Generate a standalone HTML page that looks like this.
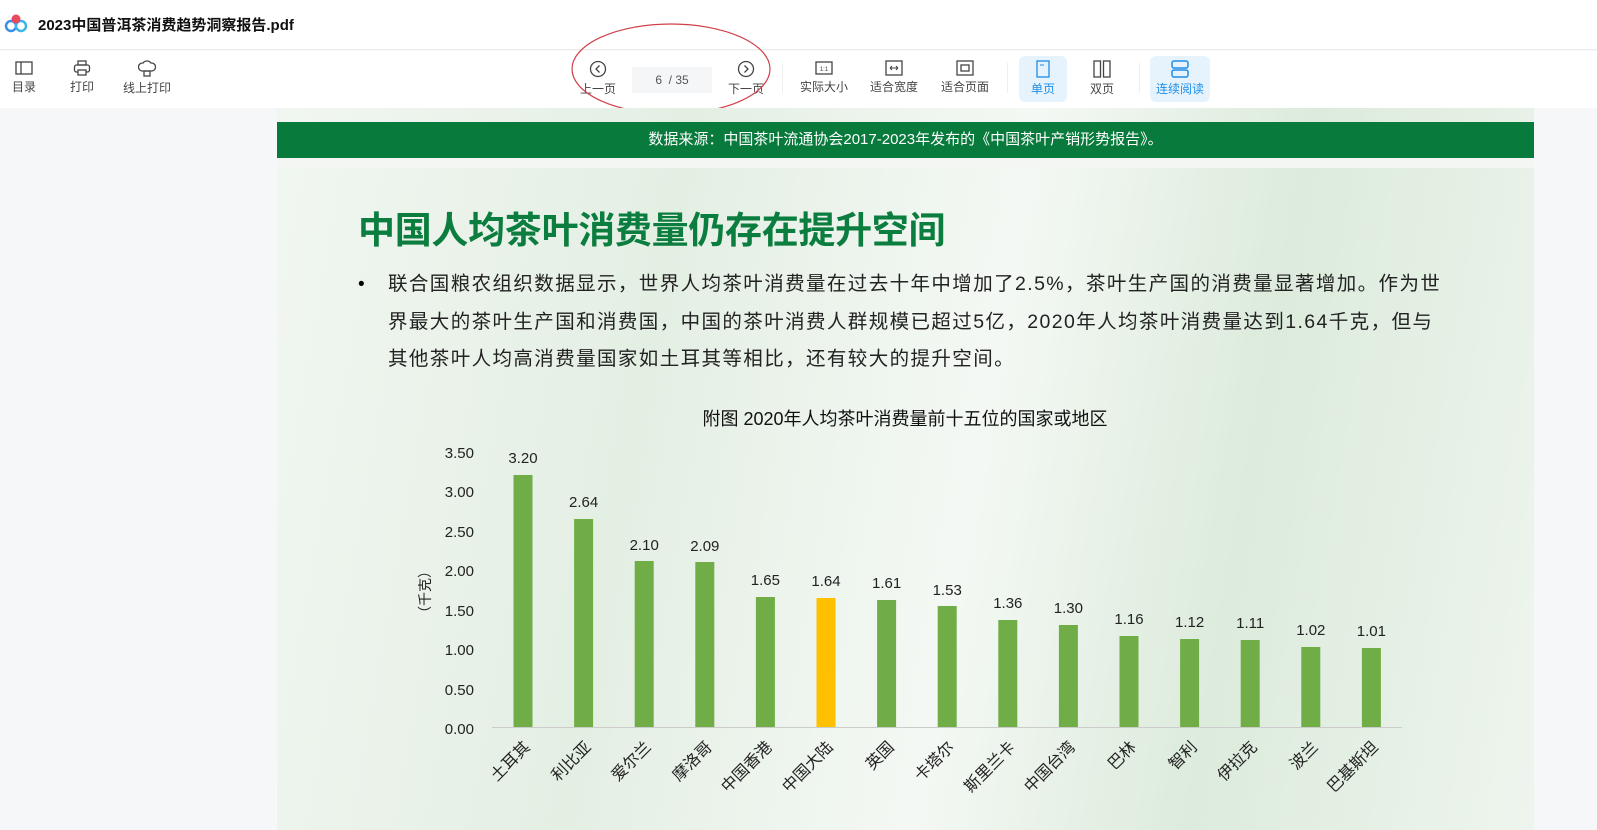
<!DOCTYPE html>
<html><head><meta charset="utf-8"><style>
*{margin:0;padding:0;box-sizing:border-box}
body{width:1597px;height:830px;overflow:hidden;background:#f6f7f9;font-family:"Liberation Sans","Noto Sans CJK SC",sans-serif;position:relative}
.top{position:absolute;left:0;top:0;width:1597px;height:50px;background:#fff;border-bottom:1px solid #ececec}
.title{position:absolute;left:38px;top:14px;font-size:15px;font-weight:bold;color:#111}
.tb{position:absolute;left:0;top:51px;width:1597px;height:57px;background:#fff}
.btn{position:absolute;top:0;height:52px;font-size:12px;color:#444;text-align:center}
.btn svg{display:block;margin:9px auto 2px}
.act{background:#e6f3fd;border-radius:6px;color:#1e8ee8}
.sep{position:absolute;top:12px;width:1px;height:30px;background:#eee}
.page{position:absolute;left:277px;top:108px;width:1257px;height:722px;background:linear-gradient(100deg,#f1f6f1 0%,#e4efe4 30%,#f4f8f4 55%,#dcebdc 75%,#eef5ee 100%)}
.band{position:absolute;left:277px;top:122px;width:1257px;height:36px;background:#077a3c;color:#fff;font-size:15px;text-align:center;line-height:36px}
.gap{position:absolute;left:277px;top:158px;width:1257px;height:10px;background:#f4f6f4}
.h1{position:absolute;left:358px;top:200px;font-size:37px;font-weight:bold;color:#0b7d3e;letter-spacing:-0.3px}
.p{position:absolute;left:388px;top:266px;font-size:19.5px;letter-spacing:1.4px;line-height:37.5px;color:#222;white-space:nowrap}
.dot{position:absolute;left:358px;top:266px;font-size:19px;line-height:37.5px}
</style></head><body>
<div class="top">
<svg style="position:absolute;left:4px;top:13px" width="24" height="20" viewBox="0 0 24 20"><circle cx="7" cy="13" r="5" fill="none" stroke="#3a8ee6" stroke-width="2.5"/><circle cx="17" cy="13" r="5" fill="none" stroke="#39b7e8" stroke-width="2.5"/><circle cx="12" cy="6" r="4.5" fill="#e84b5b"/></svg>
<div class="title">2023中国普洱茶消费趋势洞察报告.pdf</div>
</div>
<div class="tb">
<div class="btn" style="left:8px;width:32px"><svg width="18" height="16"><rect x="1" y="2" width="16" height="12" fill="none" stroke="#444" stroke-width="1.3"/><line x1="6" y1="2" x2="6" y2="14" stroke="#444" stroke-width="1.3"/></svg>目录</div>
<div class="btn" style="left:66px;width:32px"><svg width="18" height="16"><rect x="5" y="1" width="8" height="4" fill="none" stroke="#444" stroke-width="1.3"/><rect x="1.5" y="5" width="15" height="7" rx="2" fill="none" stroke="#444" stroke-width="1.3"/><rect x="5" y="10" width="8" height="5" fill="#fff" stroke="#444" stroke-width="1.3"/></svg>打印</div>
<div class="btn" style="left:122px;width:50px"><svg width="18" height="17"><path d="M4 11a4 4 0 0 1 1-8 5 5 0 0 1 8 0 4 4 0 0 1 1 8z" fill="none" stroke="#444" stroke-width="1.3"/><rect x="6" y="11" width="6" height="5" fill="none" stroke="#444" stroke-width="1.3"/></svg>线上打印</div>
<div class="btn" style="left:578px;width:40px"><svg width="18" height="18"><circle cx="9" cy="9" r="7.5" fill="none" stroke="#444" stroke-width="1.3"/><path d="M10.5 5.5 7 9l3.5 3.5" fill="none" stroke="#444" stroke-width="1.3"/></svg>上一页</div>
<div style="position:absolute;left:632px;top:16px;width:80px;height:26px;background:#f4f6f8;font-size:12px;color:#555;text-align:center;line-height:26px">6&nbsp;&nbsp;/ 35</div>
<div class="btn" style="left:726px;width:40px"><svg width="18" height="18"><circle cx="9" cy="9" r="7.5" fill="none" stroke="#444" stroke-width="1.3"/><path d="M7.5 5.5 11 9l-3.5 3.5" fill="none" stroke="#444" stroke-width="1.3"/></svg>下一页</div>
<div class="sep" style="left:782px"></div>
<div class="btn" style="left:798px;width:52px"><svg width="18" height="16"><rect x="1" y="2" width="16" height="12" fill="none" stroke="#444" stroke-width="1.3"/><text x="9" y="11" font-size="6" text-anchor="middle" fill="#444">1:1</text></svg>实际大小</div>
<div class="btn" style="left:868px;width:52px"><svg width="18" height="16"><rect x="1" y="1" width="16" height="14" fill="none" stroke="#444" stroke-width="1.3"/><path d="M5 8h8M5 8l2-2M5 8l2 2M13 8l-2-2M13 8l-2 2" stroke="#444" fill="none"/></svg>适合宽度</div>
<div class="btn" style="left:939px;width:52px"><svg width="18" height="16"><rect x="1" y="1" width="16" height="14" fill="none" stroke="#444" stroke-width="1.3"/><rect x="5" y="5" width="8" height="6" fill="none" stroke="#444" stroke-width="1.3"/></svg>适合页面</div>
<div class="sep" style="left:1007px"></div>
<div class="btn act" style="left:1019px;width:48px;top:5px;height:46px"><svg width="14" height="18" style="margin-top:4px"><rect x="1" y="1" width="12" height="16" fill="none" stroke="#1e8ee8" stroke-width="1.3"/><line x1="4" y1="5" x2="8" y2="5" stroke="#1e8ee8"/></svg>单页</div>
<div class="btn" style="left:1080px;width:44px"><svg width="18" height="18"><rect x="1" y="1" width="6.5" height="16" fill="none" stroke="#444" stroke-width="1.3"/><rect x="10.5" y="1" width="6.5" height="16" fill="none" stroke="#444" stroke-width="1.3"/></svg>双页</div>
<div class="sep" style="left:1139px"></div>
<div class="btn act" style="left:1150px;width:60px;top:5px;height:46px"><svg width="18" height="18" style="margin-top:4px"><rect x="1" y="1" width="16" height="7" rx="2" fill="none" stroke="#1e8ee8" stroke-width="1.5"/><rect x="1" y="10" width="16" height="7" rx="2" fill="none" stroke="#1e8ee8" stroke-width="1.5"/></svg>连续阅读</div>
</div>
<svg style="position:absolute;left:570px;top:22px" width="202" height="96"><ellipse cx="101" cy="47" rx="99" ry="45" fill="none" stroke="#d0404a" stroke-width="1.2"/></svg>
<div class="page"></div>
<div class="band">数据来源：中国茶叶流通协会2017-2023年发布的《中国茶叶产销形势报告》。</div>
<div class="gap"></div>
<div class="h1">中国人均茶叶消费量仍存在提升空间</div>
<div class="dot">•</div>
<div class="p">联合国粮农组织数据显示，世界人均茶叶消费量在过去十年中增加了2.5%，茶叶生产国的消费量显著增加。作为世<br>界最大的茶叶生产国和消费国，中国的茶叶消费人群规模已超过5亿，2020年人均茶叶消费量达到1.64千克，但与<br>其他茶叶人均高消费量国家如土耳其等相比，还有较大的提升空间。</div>
<svg style="position:absolute;left:0;top:0" width="1597" height="830" font-family="Liberation Sans, Noto Sans CJK SC, sans-serif">
<text x="905" y="425" font-size="18" text-anchor="middle" fill="#111">附图 2020年人均茶叶消费量前十五位的国家或地区</text>
<g font-size="15" fill="#222" text-anchor="end">
<text x="474" y="458">3.50</text><text x="474" y="497">3.00</text><text x="474" y="537">2.50</text><text x="474" y="576">2.00</text><text x="474" y="616">1.50</text><text x="474" y="655">1.00</text><text x="474" y="695">0.50</text><text x="474" y="734">0.00</text>
</g>
<text transform="translate(430,592) rotate(-90)" font-size="14" text-anchor="middle" fill="#222">（千克）</text>
<line x1="492" y1="727.5" x2="1402" y2="727.5" stroke="#ccc" stroke-width="1"/>
<g fill="#70ad47">
<rect x="513.5" y="475" width="19" height="252"/>
<rect x="574.1" y="519" width="19" height="208"/>
<rect x="634.7" y="561" width="19" height="166"/>
<rect x="695.3" y="562" width="19" height="165"/>
<rect x="755.9" y="597" width="19" height="130"/>
<rect x="816.5" y="598" width="19" height="129" fill="#ffc000"/>
<rect x="877.1" y="600" width="19" height="127"/>
<rect x="937.7" y="606" width="19" height="121"/>
<rect x="998.3" y="620" width="19" height="107"/>
<rect x="1058.9" y="625" width="19" height="102"/>
<rect x="1119.5" y="636" width="19" height="91"/>
<rect x="1180.1" y="639" width="19" height="88"/>
<rect x="1240.7" y="640" width="19" height="87"/>
<rect x="1301.3" y="647" width="19" height="80"/>
<rect x="1361.9" y="648" width="19" height="79"/>
</g>
<g font-size="15" fill="#222" text-anchor="middle">
<text x="523" y="463">3.20</text><text x="583.6" y="507">2.64</text><text x="644.2" y="550">2.10</text><text x="704.8" y="551">2.09</text><text x="765.4" y="585">1.65</text><text x="826" y="586">1.64</text><text x="886.6" y="588">1.61</text><text x="947.2" y="595">1.53</text><text x="1007.8" y="608">1.36</text><text x="1068.4" y="613">1.30</text><text x="1129" y="624">1.16</text><text x="1189.6" y="627">1.12</text><text x="1250.2" y="628">1.11</text><text x="1310.8" y="635">1.02</text><text x="1371.4" y="636">1.01</text>
</g>
<g font-size="16" fill="#222" text-anchor="end">
<text transform="translate(531,748) rotate(-45)">土耳其</text>
<text transform="translate(592,748) rotate(-45)">利比亚</text>
<text transform="translate(652,748) rotate(-45)">爱尔兰</text>
<text transform="translate(713,748) rotate(-45)">摩洛哥</text>
<text transform="translate(773,748) rotate(-45)">中国香港</text>
<text transform="translate(834,748) rotate(-45)">中国大陆</text>
<text transform="translate(895,748) rotate(-45)">英国</text>
<text transform="translate(955,748) rotate(-45)">卡塔尔</text>
<text transform="translate(1016,748) rotate(-45)">斯里兰卡</text>
<text transform="translate(1076,748) rotate(-45)">中国台湾</text>
<text transform="translate(1137,748) rotate(-45)">巴林</text>
<text transform="translate(1198,748) rotate(-45)">智利</text>
<text transform="translate(1258,748) rotate(-45)">伊拉克</text>
<text transform="translate(1319,748) rotate(-45)">波兰</text>
<text transform="translate(1379,748) rotate(-45)">巴基斯坦</text>
</g>
</svg>
</body></html>
